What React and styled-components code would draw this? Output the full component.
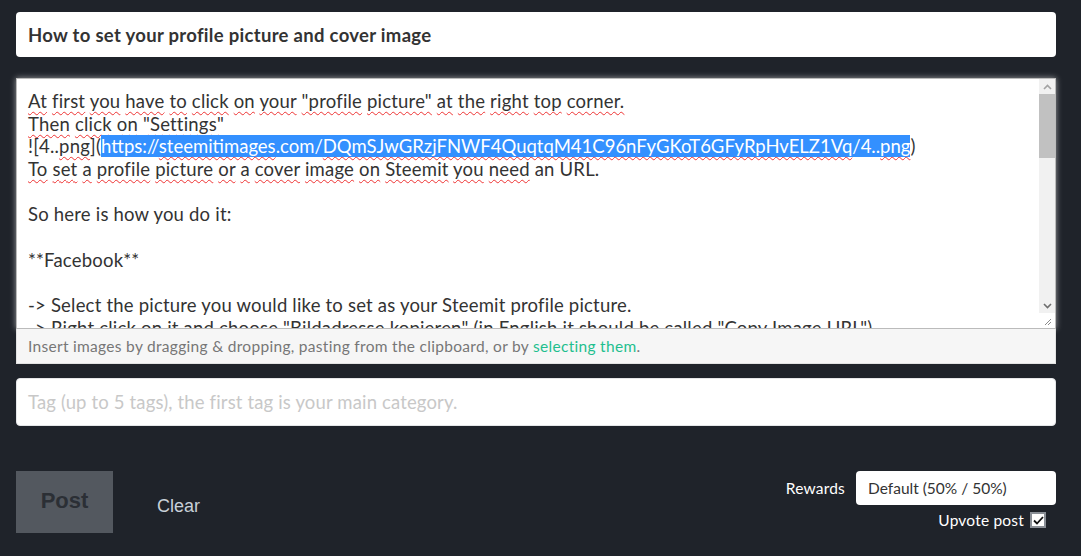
import React from "react";
import styled, { createGlobalStyle } from "styled-components";

const GlobalStyle = createGlobalStyle`
  html, body {
    margin: 0;
    padding: 0;
    background: #1f232a;
  }
  body {
    font-family: "Lato", "Liberation Sans", sans-serif;
  }
`;

const Page = styled.div`
  width: 1081px;
  height: 556px;
  box-sizing: border-box;
  padding: 12px 25px 0 16px;
  display: flex;
  flex-direction: column;
  overflow: hidden;
`;

const TitleInput = styled.div`
  height: 45px;
  box-sizing: border-box;
  background: #fff;
  border-radius: 4px;
  padding: 0 12px;
  display: flex;
  align-items: center;
  font-size: 18.5px;
  letter-spacing: 0.3px;
  font-weight: 700;
  color: #333;
`;

const EditorWrap = styled.div`
  margin-top: 21px;
  display: flex;
  flex-direction: column;
`;

const Editor = styled.div`
  height: 251px;
  box-sizing: border-box;
  background: #fff;
  border: 1px solid #bbb;
  box-shadow: 0 0 6px rgba(255, 255, 255, 0.55);
  display: flex;
`;

const EditorText = styled.div`
  flex: 1;
  padding: 11px 0 0 11px;
  font-size: 18.5px;
  letter-spacing: 0.2px;
  line-height: 22.7px;
  color: #333;
  white-space: pre;
  overflow: hidden;
`;

const Line = styled.div`
  height: 22.7px;
`;

const Bad = styled.span`
  text-decoration: underline wavy #e33;
  text-decoration-thickness: 1px;
  text-underline-offset: 3px;
`;

const Selected = styled.span`
  background: #3390ff;
  color: #fff;
  letter-spacing: 0;
`;

const Scrollbar = styled.div`
  width: 16px;
  background: #f1f1f1;
  display: flex;
  flex-direction: column;
  align-items: stretch;
`;

const ScrollArrow = styled.div`
  height: 15px;
  display: flex;
  align-items: center;
  justify-content: center;
`;

const Thumb = styled.div`
  height: 64px;
  background: #c1c1c1;
`;

const Track = styled.div`
  flex: 1;
`;

const Resizer = styled.div`
  height: 15px;
  background: #fff;
  display: flex;
  align-items: center;
  justify-content: center;
`;

const HelpBar = styled.div`
  height: 35px;
  box-sizing: border-box;
  background: #f6f6f6;
  border: 1px solid #e2e2e2;
  border-top: none;
  padding: 0 11px;
  display: flex;
  align-items: center;
  font-size: 15.5px;
  letter-spacing: 0.3px;
  color: #777;
`;

const Link = styled.span`
  color: #1fbf8f;
`;

const TagInput = styled.div`
  margin-top: 14px;
  height: 48px;
  box-sizing: border-box;
  background: #fff;
  border-radius: 4px;
  border: 1px solid #e4e6e8;
  padding: 0 11px;
  display: flex;
  align-items: center;
  font-size: 18.5px;
  letter-spacing: 0.15px;
  color: #c8c8c8;
`;

const Footer = styled.div`
  margin-top: 45px;
  display: flex;
  justify-content: space-between;
  align-items: flex-start;
`;

const Actions = styled.div`
  display: flex;
  align-items: center;
`;

const PostButton = styled.div`
  width: 97px;
  height: 62px;
  background: #53585f;
  color: #2b2f35;
  font-family: "Liberation Sans", Arial, sans-serif;
  font-weight: 700;
  font-size: 22px;
  display: flex;
  align-items: center;
  justify-content: center;
  padding-bottom: 2px;
  box-sizing: border-box;
`;

const ClearButton = styled.div`
  margin-left: 44px;
  margin-top: 8px;
  font-family: "Liberation Sans", Arial, sans-serif;
  font-size: 18px;
  color: #c8d0d8;
`;

const Options = styled.div`
  display: flex;
  flex-direction: column;
  align-items: flex-end;
`;

const RewardsRow = styled.div`
  display: flex;
  align-items: center;
  gap: 11px;
`;

const Label = styled.span`
  color: #fff;
  font-size: 15.5px;
  letter-spacing: 0.2px;
`;

const Select = styled.div`
  width: 200px;
  height: 34px;
  box-sizing: border-box;
  background: #fff;
  border-radius: 4px;
  padding: 0 12px;
  display: flex;
  align-items: center;
  font-size: 15.5px;
  color: #333;
`;

const UpvoteRow = styled.label`
  margin-top: 6px;
  margin-right: 10px;
  display: flex;
  align-items: center;
  gap: 6px;
`;

const Check = styled.span`
  width: 16px;
  height: 16px;
  box-sizing: border-box;
  border: 2px solid #8a8f96;
  background: #fff;
  display: flex;
  align-items: center;
  justify-content: center;
`;

const words = (text) =>
  text.split(" ").map((w, i, arr) => (
    <React.Fragment key={i}>
      <Bad>{w}</Bad>
      {i < arr.length - 1 ? " " : ""}
    </React.Fragment>
  ));

export default function App() {
  return (
    <>
      <GlobalStyle />
      <Page>
        <TitleInput>How to set your profile picture and cover image</TitleInput>
        <EditorWrap>
          <Editor>
            <EditorText>
              <Line>{words('At first you have to click on your "profile picture" at the right top corner.')}</Line>
              <Line>{words('Then click on "Settings"')}</Line>
              <Line>
                ![4..<Bad>png</Bad>](
                <Selected>
                  https://<Bad>steemitimages</Bad>.com/<Bad>DQmSJwGRzjFNWF4QuqtqM41C96nFyGKoT6GFyRpHvELZ1Vq</Bad>/4..<Bad>png</Bad>
                </Selected>
                )
              </Line>
              <Line>
                {words("To set a profile picture or a cover image on Steemit you need")} an URL.
              </Line>
              <Line> </Line>
              <Line>So here is how you do it:</Line>
              <Line> </Line>
              <Line>**Facebook**</Line>
              <Line> </Line>
              <Line>-&gt; Select the picture you would like to set as your Steemit profile picture.</Line>
              <Line>-&gt; Right click on it and choose "Bildadresse kopieren" (in English it should be called "Copy Image URL")</Line>
            </EditorText>
            <Scrollbar>
              <ScrollArrow>
                <svg width="9" height="6" viewBox="0 0 9 6">
                  <path d="M1 5 L4.5 1.5 L8 5" fill="none" stroke="#a3a3a3" strokeWidth="1.6" />
                </svg>
              </ScrollArrow>
              <Thumb />
              <Track />
              <ScrollArrow>
                <svg width="9" height="6" viewBox="0 0 9 6">
                  <path d="M1 1 L4.5 4.5 L8 1" fill="none" stroke="#6e6e6e" strokeWidth="1.6" />
                </svg>
              </ScrollArrow>
              <Resizer>
                <svg width="10" height="10" viewBox="0 0 10 10">
                  <path d="M9 3 L3 9 M9 6 L6 9" stroke="#8a8a8a" strokeWidth="1" />
                </svg>
              </Resizer>
            </Scrollbar>
          </Editor>
          <HelpBar>
            Insert images by dragging &amp; dropping, pasting from the clipboard, or by&nbsp;
            <Link>selecting them</Link>.
          </HelpBar>
        </EditorWrap>
        <TagInput>Tag (up to 5 tags), the first tag is your main category.</TagInput>
        <Footer>
          <Actions>
            <PostButton>Post</PostButton>
            <ClearButton>Clear</ClearButton>
          </Actions>
          <Options>
            <RewardsRow>
              <Label>Rewards</Label>
              <Select>Default (50% / 50%)</Select>
            </RewardsRow>
            <UpvoteRow>
              <Label>Upvote post</Label>
              <Check>
                <svg width="11" height="9" viewBox="0 0 11 9">
                  <path d="M1 4.5 L4 7.5 L10 1" fill="none" stroke="#111" strokeWidth="1.8" />
                </svg>
              </Check>
            </UpvoteRow>
          </Options>
        </Footer>
      </Page>
    </>
  );
}
